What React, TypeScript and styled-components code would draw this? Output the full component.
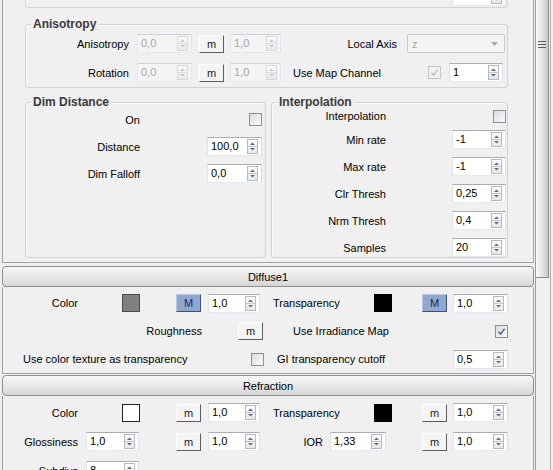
import React from 'react';
import styled, { createGlobalStyle } from 'styled-components';

const GlobalStyle = createGlobalStyle`
  html, body {
    margin: 0;
    padding: 0;
    background: #f0f0f0;
    overflow: hidden;
  }
  body {
    font-family: "Liberation Sans", Arial, sans-serif;
    font-size: 11px;
    color: #000;
  }
`;

const Page = styled.div`
  display: flex;
  width: 553px;
  height: 470px;
  overflow: hidden;
  background: #f0f0f0;
`;

const Panel = styled.div`
  width: 535px;
  flex: none;
  display: flex;
  flex-direction: column;
`;

const RolloutBody = styled.div<{ $pt?: number; $pb?: number }>`
  display: flex;
  flex-direction: column;
  flex: none;
  margin-left: 2px;
  width: 532px;
  box-sizing: border-box;
  border: 1px solid #a3a3a3;
  border-top: none;
  padding: ${p => p.$pt ?? 0}px 0 ${p => p.$pb ?? 0}px 0;
`;

const RolloutHeader = styled.div<{ $mt: number }>`
  flex: none;
  margin: ${p => p.$mt}px 0 0 2px;
  width: 532px;
  height: 21px;
  box-sizing: border-box;
  border: 1px solid #8e8e8e;
  border-radius: 4px;
  background: linear-gradient(#f8f8f8, #e6e6e6 55%, #d6d6d6);
  display: flex;
  align-items: center;
  justify-content: center;
`;

const GroupBox = styled.div<{ $w: number; $h: number; $mt?: number; $pt?: number }>`
  position: relative;
  flex: none;
  box-sizing: border-box;
  width: ${p => p.$w}px;
  height: ${p => p.$h}px;
  margin-top: ${p => p.$mt ?? 0}px;
  padding-top: ${p => p.$pt ?? 0}px;
  border: 1px solid #d2d2d2;
  border-radius: 3px;
  box-shadow: inset 1px 1px 0 #fafafa;
  display: flex;
  flex-direction: column;
`;

const StubGroup = styled(GroupBox)`
  margin-left: 22px;
  flex-direction: row;
  align-items: flex-end;
  justify-content: flex-end;
  padding: 0 1px 1px 0;
`;

const GroupTitle = styled.span`
  position: absolute;
  top: -8px;
  left: 5px;
  padding: 0 2px;
  background: #f0f0f0;
  font-size: 12px;
  font-weight: bold;
  line-height: 14px;
  color: #3a3a3a;
`;

const GroupRow = styled.div`
  display: flex;
  gap: 5px;
  margin: 14px 0 0 22px;
  flex: none;
`;

const Row = styled.div<{ $h: number }>`
  display: flex;
  align-items: center;
  flex: none;
  height: ${p => p.$h}px;
`;

const Label = styled.span<{ $w: number; $ml?: number; $right?: boolean }>`
  flex: none;
  width: ${p => p.$w}px;
  margin-left: ${p => p.$ml ?? 0}px;
  text-align: ${p => (p.$right ? 'right' : 'left')};
  white-space: nowrap;
  line-height: 14px;
`;

const SpinBox = styled.div<{ $w: number; $ml?: number; $off?: boolean }>`
  flex: none;
  box-sizing: border-box;
  width: ${p => p.$w}px;
  height: 19px;
  margin-left: ${p => p.$ml ?? 0}px;
  padding: 0 3px;
  display: flex;
  align-items: center;
  border: 1px solid;
  border-color: ${p => (p.$off ? '#cfd1d6 #e3e4e8 #e6e8ec #e3e4e8' : '#abadb3 #dbdfe6 #e3e9ef #e2e3ea')};
  background: ${p => (p.$off ? '#f4f4f4' : '#ffffff')};
`;

const SpinValue = styled.span<{ $off?: boolean }>`
  flex: 1;
  line-height: 15px;
  color: ${p => (p.$off ? '#a6a6a6' : '#000')};
  white-space: nowrap;
`;

const SpinArrows = styled.span<{ $off?: boolean }>`
  flex: none;
  width: 11px;
  height: 15px;
  box-sizing: border-box;
  border: 1px solid ${p => (p.$off ? '#d6d8dc' : '#b4b9c2')};
  background: linear-gradient(#fbfbfb, #e8e8e8);
  display: flex;
`;

const MapBtn = styled.span<{ $ml?: number; $active?: boolean }>`
  flex: none;
  box-sizing: border-box;
  width: 25px;
  height: 18px;
  margin-left: ${p => p.$ml ?? 0}px;
  display: flex;
  align-items: center;
  justify-content: center;
  border: 1px solid;
  border-color: ${p => (p.$active ? '#b9c9e4 #3e5073 #3e5073 #b9c9e4' : '#ffffff #5e5e5e #5e5e5e #ffffff')};
  background: ${p => (p.$active ? '#8fa8d2' : '#f4f4f4')};
  color: ${p => (p.$active ? '#1c2a44' : '#1a1a1a')};
  line-height: 14px;
`;

const Swatch = styled.span<{ $color: string; $ml?: number; $edge: string }>`
  flex: none;
  box-sizing: border-box;
  width: 18px;
  height: 18px;
  margin-left: ${p => p.$ml ?? 0}px;
  border: 1px solid ${p => p.$edge};
  background: ${p => p.$color};
`;

const CheckBox = styled.span<{ $ml?: number; $off?: boolean }>`
  flex: none;
  box-sizing: border-box;
  width: 13px;
  height: 13px;
  margin-left: ${p => p.$ml ?? 0}px;
  border: 1px solid ${p => (p.$off ? '#c4c4c4' : '#8e8f8f')};
  background: ${p => (p.$off ? '#f2f2f2' : 'linear-gradient(135deg, #d8dbe0, #fbfbfb)')};
  display: flex;
  align-items: center;
  justify-content: center;
`;

const Select = styled.div<{ $w: number; $ml?: number }>`
  flex: none;
  box-sizing: border-box;
  width: ${p => p.$w}px;
  height: 19px;
  margin-left: ${p => p.$ml ?? 0}px;
  padding: 0 6px 0 4px;
  display: flex;
  align-items: center;
  justify-content: space-between;
  border: 1px solid #c9c9c9;
  border-radius: 2px;
  background: #f4f4f4;
  color: #a6a6a6;
`;

const ScrollTrack = styled.div`
  flex: none;
  width: 18px;
  height: 470px;
  box-sizing: border-box;
  border-left: 1px solid #9d9d9d;
  background: #f0f0f0;
  box-shadow: inset -2px 0 0 #f0f0f0, inset -3px 0 0 #acacac;
`;

const Thumb = styled.div`
  width: 13px;
  height: 278px;
  box-sizing: border-box;
  padding-top: 41px;
  border-right: 1px solid #8a8a8a;
  border-bottom: 1px solid #8a8a8a;
  background: linear-gradient(to right, #f7f7f7, #e8e8e8 45%, #c8c8c8);
  display: flex;
  flex-direction: column;
  align-items: center;
  gap: 2px;
`;

const Grip = styled.span`
  width: 8px;
  height: 1px;
  background: #5c5c5c;
`;

const Spinner = ({ w, ml, value, off }: { w: number; ml?: number; value: string; off?: boolean }) => {
  const fill = off ? '#c3c7ce' : '#5f6f8e';
  return (
    <SpinBox $w={w} $ml={ml} $off={off}>
      <SpinValue $off={off}>{value}</SpinValue>
      <SpinArrows $off={off}>
        <svg width="9" height="13" viewBox="0 0 9 13">
          <path d="M2 5 L4.5 2.5 L7 5 Z" fill={fill} />
          <line x1="0" y1="6.5" x2="9" y2="6.5" stroke={off ? '#dcdee2' : '#c3c7ce'} />
          <path d="M2 8 L4.5 10.5 L7 8 Z" fill={fill} />
        </svg>
      </SpinArrows>
    </SpinBox>
  );
};

const Check = ({ ml, checked, off }: { ml?: number; checked?: boolean; off?: boolean }) => (
  <CheckBox $ml={ml} $off={off}>
    {checked && (
      <svg width="9" height="9" viewBox="0 0 9 9">
        <path d="M1.5 4.8 L3.6 7 L7.6 1.8" fill="none" stroke={off ? '#c2c2c2' : '#56698f'} strokeWidth="1.6" />
      </svg>
    )}
  </CheckBox>
);

const interpRows = [
  ['Min rate', '-1'],
  ['Max rate', '-1'],
  ['Clr Thresh', '0,25'],
  ['Nrm Thresh', '0,4'],
  ['Samples', '20'],
];

const App = () => (
  <Page>
    <GlobalStyle />
    <Panel>
      <RolloutBody $pb={4}>
        <StubGroup $w={483} $h={48} $mt={-40}>
          <Spinner w={54} value="" />
        </StubGroup>

        <GroupBox $w={483} $h={64} $mt={16} $pt={9} style={{ marginLeft: 22 }}>
          <GroupTitle>Anisotropy</GroupTitle>
          <Row $h={19}>
            <Label $w={103} $right>Anisotropy</Label>
            <Spinner w={55} ml={8} value="0,0" off />
            <MapBtn $ml={7}>m</MapBtn>
            <Spinner w={51} ml={6} value="1,0" off />
            <Label $w={116} $right>Local Axis</Label>
            <Select $w={98} $ml={10}>
              <span>z</span>
              <svg width="7" height="4" viewBox="0 0 7 4">
                <path d="M0 0 L7 0 L3.5 4 Z" fill="#a9a9a9" />
              </svg>
            </Select>
          </Row>
          <Row $h={19} style={{ marginTop: 10 }}>
            <Label $w={103} $right>Rotation</Label>
            <Spinner w={55} ml={8} value="0,0" off />
            <MapBtn $ml={7}>m</MapBtn>
            <Spinner w={51} ml={6} value="1,0" off />
            <Label $w={135} $ml={12}>Use Map Channel</Label>
            <Check checked off />
            <Spinner w={54} ml={8} value="1" />
          </Row>
        </GroupBox>

        <GroupRow>
          <GroupBox $w={241} $h={156} $pt={3}>
            <GroupTitle>Dim Distance</GroupTitle>
            <Row $h={27}>
              <Label $w={114} $right>On</Label>
              <Check ml={109} />
            </Row>
            <Row $h={27}>
              <Label $w={114} $right>Distance</Label>
              <Spinner w={55} ml={67} value="100,0" />
            </Row>
            <Row $h={27}>
              <Label $w={114} $right>Dim Falloff</Label>
              <Spinner w={55} ml={67} value="0,0" />
            </Row>
          </GroupBox>
          <GroupBox $w={237} $h={156} $pt={3}>
            <GroupTitle>Interpolation</GroupTitle>
            <Row $h={20}>
              <Label $w={114} $right>Interpolation</Label>
              <Check ml={107} />
            </Row>
            {interpRows.map(([name, value]) => (
              <Row $h={27} key={name}>
                <Label $w={114} $right>{name}</Label>
                <Spinner w={54} ml={66} value={value} />
              </Row>
            ))}
          </GroupBox>
        </GroupRow>
      </RolloutBody>

      <RolloutHeader $mt={3}>Diffuse1</RolloutHeader>
      <RolloutBody $pt={2}>
        <Row $h={28}>
          <Label $w={75} $right>Color</Label>
          <Swatch $ml={44} $color="#808080" $edge="#4a4a4a" />
          <MapBtn $ml={36} $active>M</MapBtn>
          <Spinner w={52} ml={7} value="1,0" />
          <Label $w={101} $ml={13}>Transparency</Label>
          <Swatch $color="#000" $edge="#000" />
          <MapBtn $ml={30} $active>M</MapBtn>
          <Spinner w={55} ml={6} value="1,0" />
        </Row>
        <Row $h={28}>
          <Label $w={199} $right>Roughness</Label>
          <MapBtn $ml={36}>m</MapBtn>
          <Label $w={202} $ml={30}>Use Irradiance Map</Label>
          <Check checked />
        </Row>
        <Row $h={28}>
          <Label $w={228} $ml={20}>Use color texture as transparency</Label>
          <Check />
          <Label $w={176} $ml={13}>GI transparency cutoff</Label>
          <Spinner w={55} value="0,5" />
        </Row>
      </RolloutBody>

      <RolloutHeader $mt={1}>Refraction</RolloutHeader>
      <RolloutBody $pt={2}>
        <Row $h={29}>
          <Label $w={75} $right>Color</Label>
          <Swatch $ml={44} $color="#fff" $edge="#222" />
          <MapBtn $ml={36}>m</MapBtn>
          <Spinner w={52} ml={7} value="1,0" />
          <Label $w={101} $ml={13}>Transparency</Label>
          <Swatch $color="#000" $edge="#000" />
          <MapBtn $ml={30}>m</MapBtn>
          <Spinner w={55} ml={6} value="1,0" />
        </Row>
        <Row $h={29}>
          <Label $w={75} $right>Glossiness</Label>
          <Spinner w={53} ml={8} value="1,0" />
          <MapBtn $ml={37}>m</MapBtn>
          <Spinner w={52} ml={7} value="1,0" />
          <Label $w={63} $right>IOR</Label>
          <Spinner w={56} ml={7} value="1,33" />
          <MapBtn $ml={36}>m</MapBtn>
          <Spinner w={55} ml={6} value="1,0" />
        </Row>
        <Row $h={29}>
          <Label $w={75} $right>Subdivs</Label>
          <Spinner w={53} ml={8} value="8" />
        </Row>
      </RolloutBody>
    </Panel>
    <ScrollTrack>
      <Thumb>
        <Grip />
        <Grip />
        <Grip />
      </Thumb>
    </ScrollTrack>
  </Page>
);

export default App;
